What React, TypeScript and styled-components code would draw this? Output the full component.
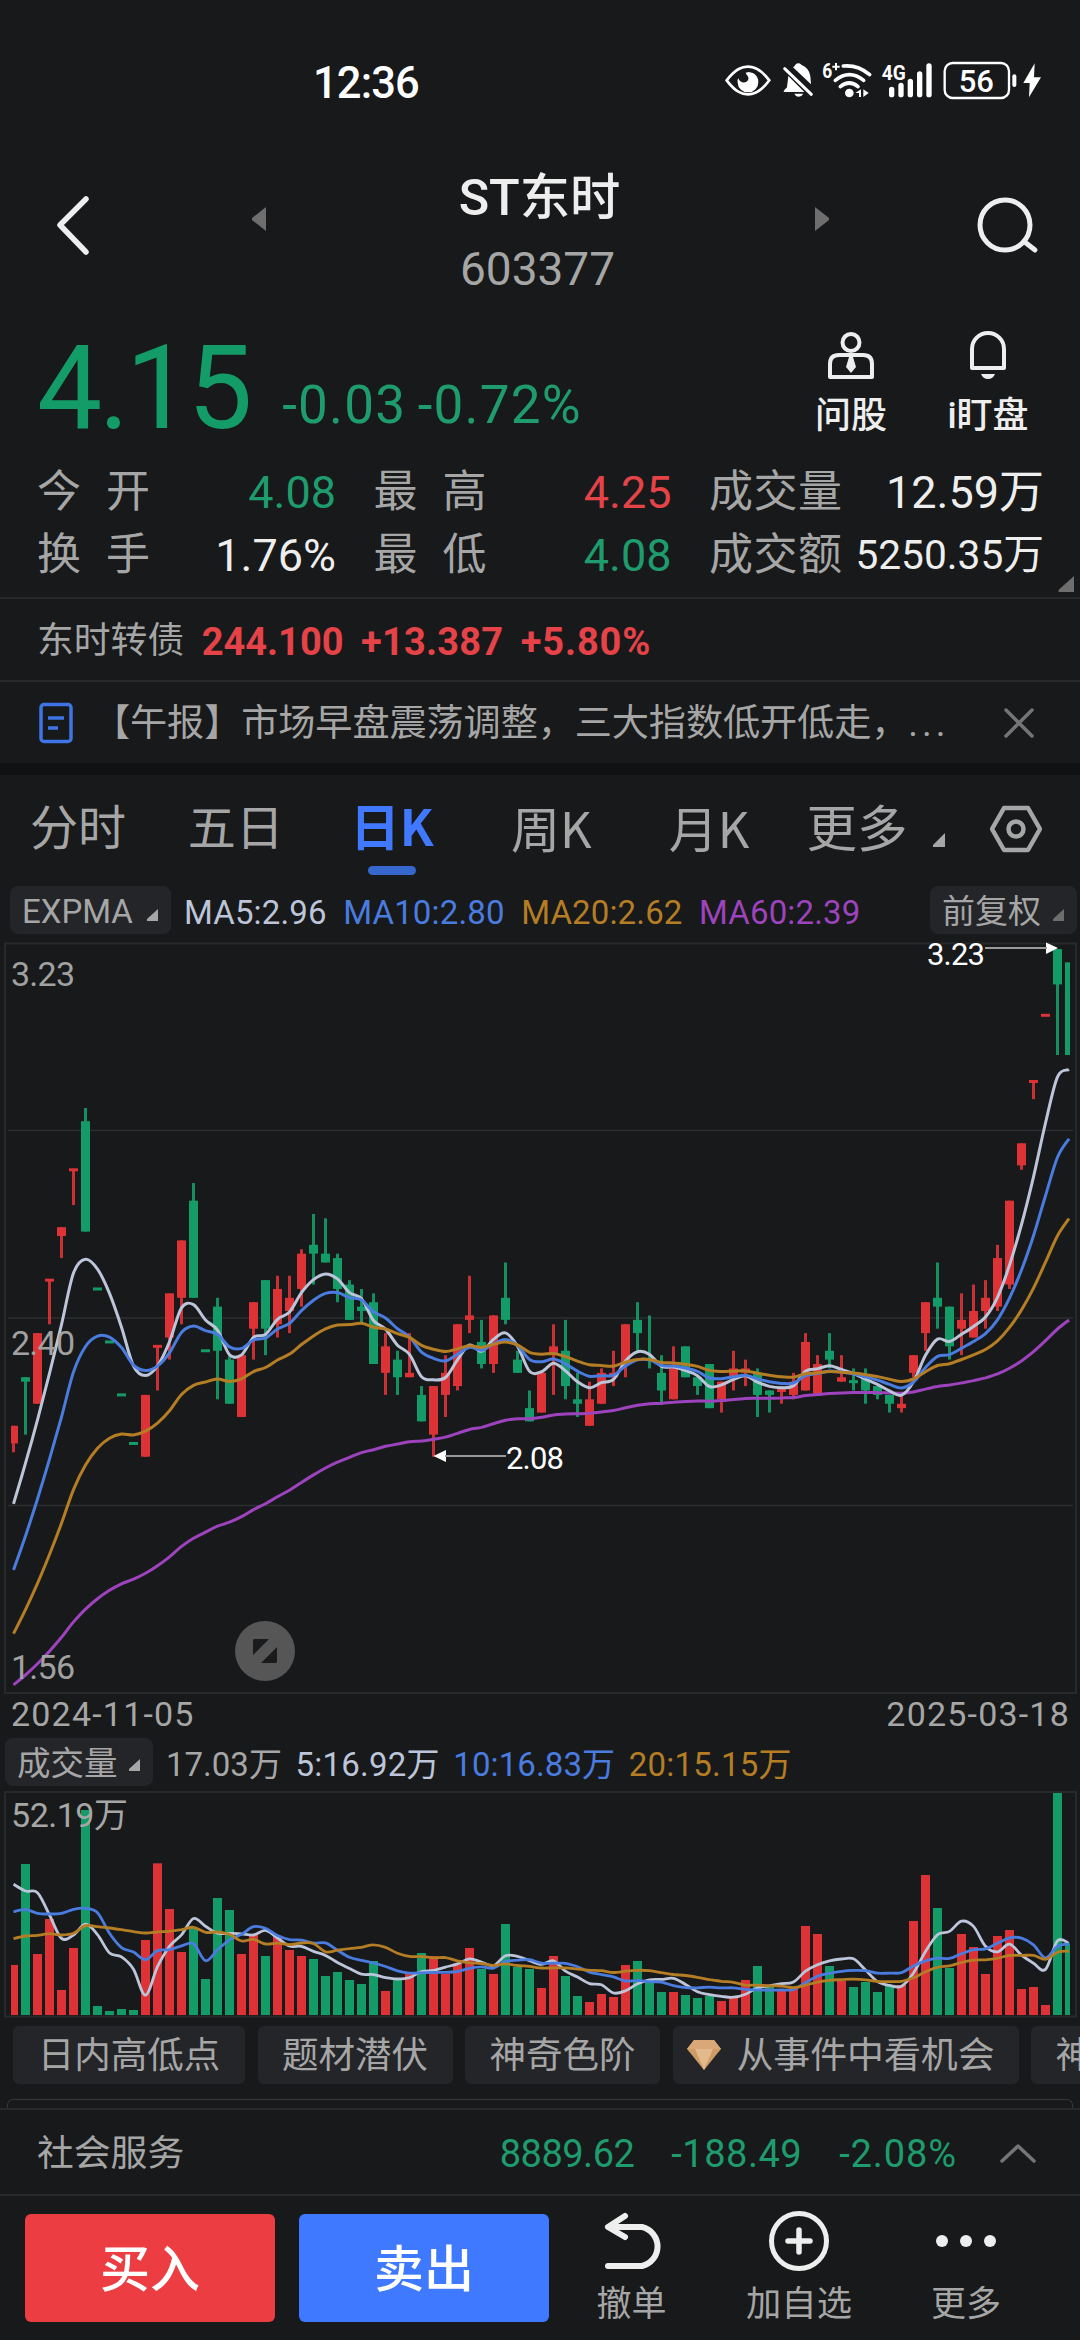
import React from "react";
import styled, { createGlobalStyle } from "styled-components";

const C = {
  bg: "#17191a",
  bright: "#eeeeee",
  text: "#a6a6a6",
  faint: "#6e6e6e",
  line: "#28292b",
  green: "#149c68",
  greenText: "#1f9c6d",
  red: "#dd3336",
  redText: "#e54348",
  blue: "#4a7ce0",
  orange: "#b57d24",
  purple: "#9d43bd",
  pale: "#bcc5d9",
  chip: "#242529",
};

const Global = createGlobalStyle`
  * { box-sizing: border-box; }
  html, body { margin: 0; background: ${C.bg}; }
  body { font-family: Roboto, "Noto Sans CJK SC", sans-serif; color: ${C.text}; }
`;

const Screen = styled.main`
  width: 1080px;
  height: 2340px;
  overflow: hidden;
  display: flex;
  flex-direction: column;
  background: ${C.bg};
`;

const Txt = styled.span<{ $s: number; $c?: string; $w?: number; $ls?: number; $cjk?: boolean }>`
  padding: ${(p) => (p.$cjk ? "0 0 0.06em" : "0.08em 0 0")};
  font-family: ${(p) => (p.$cjk ? '"Noto Sans CJK SC", sans-serif' : "inherit")};
  font-size: ${(p) => p.$s}px;
  color: ${(p) => p.$c ?? C.text};
  font-weight: ${(p) => p.$w ?? 400};
  letter-spacing: ${(p) => p.$ls ?? 0}px;
  line-height: 1;
  white-space: nowrap;
`;

/* ---------- status bar ---------- */
const StatusBar = styled.div`
  height: 164px;
  display: flex;
  align-items: center;
  justify-content: space-between;
  padding: 0 37px 0 313px;
`;
const StatusIcons = styled.div`
  display: flex;
  height: 64px;
`;

/* ---------- header ---------- */
const Header = styled.header`
  height: 156px;
  display: grid;
  grid-template-columns: 196px 189px 374px 162px 64px;
  padding-left: 55px;
`;
const HeaderIcon = styled.div<{ $top: number }>`
  padding-top: ${(p) => p.$top}px;
`;
const Titles = styled.div`
  width: 199px;
  display: flex;
  flex-direction: column;
  align-items: center;
  padding-top: 5px;
  gap: 19px;
`;
const Code = styled.div`
  display: flex;
  padding-right: 4px;
`;

/* ---------- quote ---------- */
const Quote = styled.section`
  height: 130px;
  display: flex;
  justify-content: space-between;
  padding: 0 52px 0 37px;
`;
const PriceGroup = styled.div`
  height: 126px;
  display: flex;
  align-items: flex-end;
  gap: 33px;
`;
const Change = styled.div`
  display: flex;
  gap: 11.5px;
  padding-bottom: 14px;
`;
const QuickActions = styled.div`
  display: flex;
  gap: 57px;
  padding-top: 10px;
`;
const QuickAction = styled.div`
  width: 80px;
  display: flex;
  flex-direction: column;
  align-items: center;
  gap: 15px;
`;
const Stats = styled.section`
  height: 149px;
  display: grid;
  grid-template-columns: 299px 298px 335px;
  grid-template-rows: 63px 63px;
  column-gap: 37.5px;
  padding: 9px 36px 0 37px;
  border-bottom: 2px solid ${C.line};
  position: relative;
`;
const Stat = styled.div`
  display: flex;
  align-items: center;
  justify-content: space-between;
`;
const StatLabel = styled.div<{ $wide?: boolean }>`
  width: ${(p) => (p.$wide ? 133 : 113)}px;
  display: flex;
  justify-content: space-between;
`;
const CornerMark = styled.div`
  position: absolute;
  right: 6px;
  bottom: 5px;
  display: flex;
`;

/* ---------- bond + news ---------- */
const BondRow = styled.section`
  height: 83px;
  display: flex;
  align-items: center;
  gap: 17.5px;
  padding: 1px 37px 0;
  border-bottom: 2px solid ${C.line};
`;
const NewsRow = styled.section`
  height: 81px;
  display: flex;
  align-items: center;
  padding: 0 45px 0 37px;
`;
const NewsText = styled.div`
  flex: 1;
  padding-left: 18px;
  display: flex;
  align-items: baseline;
`;
const Band = styled.div`
  height: 12px;
  background: #101112;
`;

/* ---------- tabs ---------- */
const Tabs = styled.nav`
  height: 111px;
  display: flex;
  align-items: flex-start;
  padding: 0 38px 0 30px;
`;
const Tab = styled.div<{ $w: number }>`
  width: ${(p) => p.$w}px;
  height: 105px;
  display: flex;
  flex-direction: column;
  justify-content: center;
  align-items: flex-start;
`;
const ActiveLabel = styled.div`
  display: flex;
  flex-direction: column;
  align-items: center;
  gap: 13px;
  padding-top: 20px;
`;
const Underline = styled.i`
  width: 48px;
  height: 9px;
  border-radius: 5px;
  background: #3567cc;
`;
const MoreTab = styled.div`
  width: 184px;
  height: 106px;
  display: flex;
  align-items: center;
  gap: 25px;
`;
const TabIcon = styled.div`
  height: 108px;
  display: flex;
  align-items: center;
`;

/* ---------- indicator rows ---------- */
const IndicatorRow = styled.div<{ $h: number; $gap: number; $left: number }>`
  height: ${(p) => p.$h}px;
  display: flex;
  align-items: flex-start;
  padding: 0 3px 0 ${(p) => p.$left}px;
  gap: ${(p) => p.$gap}px;
`;
const Selector = styled.div<{ $w: number; $push?: boolean }>`
  width: ${(p) => p.$w}px;
  height: 48px;
  margin-left: ${(p) => (p.$push ? "auto" : "0")};
  display: flex;
  align-items: center;
  justify-content: space-between;
  padding: 0 12px;
  border-radius: 8px;
  background: ${C.chip};
`;
const Values = styled.div<{ $gap: number }>`
  height: 50px;
  display: flex;
  align-items: center;
  gap: ${(p) => p.$gap}px;
`;
const Chart = styled.svg`
  display: block;
  flex: none;
  overflow: visible;
  font-family: Roboto, "Noto Sans CJK SC", sans-serif;
`;
const DateRow = styled.div`
  height: 44px;
  display: flex;
  align-items: center;
  justify-content: space-between;
  padding: 0 10px 7px 11px;
`;

/* ---------- chips ---------- */
const Chips = styled.div`
  height: 73px;
  display: flex;
  gap: 12.5px;
  padding: 8px 0 0 13px;
  overflow: hidden;
`;
const Chip = styled.div<{ $w: number; $icon?: boolean }>`
  flex: none;
  width: ${(p) => p.$w}px;
  height: 58px;
  display: flex;
  align-items: center;
  justify-content: center;
  gap: 15px;
  padding-right: ${(p) => (p.$icon ? 9 : 0)}px;
  border-radius: 6px;
  background: ${C.chip};
`;
const PanelEdge = styled.div`
  height: 9px;
  margin: 8px 7px 0;
  border: 1.5px solid #35373a;
  border-bottom: 0;
  border-radius: 6px 6px 0 0;
`;

/* ---------- bottom ---------- */
const SectorRow = styled.section`
  height: 88px;
  display: flex;
  align-items: center;
  padding: 1px 44px 0 37px;
  border-top: 2px solid ${C.line};
  border-bottom: 2px solid ${C.line};
`;
const SectorValues = styled.div`
  margin-left: auto;
  display: flex;
  gap: 37px;
  padding-right: 43px;
`;
const ActionBar = styled.footer`
  flex: 1;
  display: flex;
  padding: 18px 0 0 25px;
`;
const TradeButton = styled.button<{ $bg: string }>`
  width: 250px;
  height: 108px;
  margin: 0 24px 0 0;
  padding: 4px 0 0;
  border: 0;
  border-radius: 6px;
  background: ${(p) => p.$bg};
  font-family: inherit;
`;
const FootItem = styled.div<{ $w: number }>`
  width: ${(p) => p.$w}px;
  height: 112px;
  display: flex;
  flex-direction: column;
  align-items: center;
  justify-content: space-between;
  margin-top: -4px;
`;

const Tri = ({ s = 12, c = C.text }: { s?: number; c?: string }) => (
  <svg width={s} height={s} viewBox="0 0 12 12">
    <path d="M12 0V12H1Q-.5 11.5 1 10Z" fill={c} />
  </svg>
);

/* ---------- data ---------- */
type Bar = [up: number, high: number, top: number, bottom: number, low: number];

// Prices are in cents above the 2.08 low.
const candles: Bar[] = [
  [1, 7, 7, 3, 1], [0, 18, 18, 17, 5], [1, 28, 28, 12, 12], [1, 40, 40, 40, 30], [1, 52, 52, 50, 45],
  [1, 65, 65, 65, 57], [0, 79, 76, 51, 51], [0, 38, 38, 38, 38], [0, 26, 26, 26, 26], [0, 14, 14, 14, 14],
  [0, 3, 3, 3, 3], [1, 14, 14, 0, 0], [1, 25, 25, 25, 15], [1, 37, 37, 27, 22], [1, 49, 49, 36, 30],
  [0, 62, 58, 36, 36], [0, 24, 24, 24, 24], [0, 36, 34, 24, 13], [0, 23, 22, 12, 12], [1, 23, 23, 9, 9],
  [1, 35, 35, 29, 22], [0, 40, 40, 29, 23], [1, 41, 38, 30, 27], [1, 41, 36, 33, 28], [1, 47, 46, 38, 34],
  [0, 55, 48, 46, 39], [0, 54, 46, 44, 44], [0, 46, 45, 38, 35], [0, 40, 39, 31, 31], [0, 38, 34, 33, 30],
  [0, 37, 35, 21, 21], [1, 28, 25, 19, 14], [0, 24, 22, 18, 14], [1, 28, 19, 18, 18], [0, 16, 14, 8, 8],
  [1, 16, 16, 5, 0], [1, 23, 19, 14, 9], [1, 30, 30, 16, 15], [1, 41, 32, 31, 28], [0, 31, 26, 21, 20],
  [1, 32, 32, 21, 19], [0, 44, 36, 31, 30], [0, 24, 22, 19, 19], [0, 15, 11, 8, 8], [1, 19, 19, 10, 10],
  [1, 30, 25, 23, 14], [0, 31, 24, 16, 13], [0, 19, 13, 12, 9], [1, 17, 13, 7, 7], [1, 20, 19, 12, 12],
  [1, 24, 19, 18, 16], [1, 30, 30, 21, 18], [0, 35, 31, 28, 24], [0, 32, 22, 22, 20], [0, 23, 19, 15, 12],
  [1, 25, 20, 13, 13], [0, 25, 25, 18, 18], [0, 18, 18, 16, 14], [0, 21, 21, 11, 11], [1, 17, 17, 13, 10],
  [1, 24, 20, 18, 15], [1, 22, 20, 19, 16], [0, 20, 19, 14, 9], [0, 15, 15, 14, 10], [1, 16, 15, 15, 12],
  [1, 19, 17, 14, 13], [1, 28, 26, 15, 15], [1, 23, 21, 14, 14], [0, 28, 24, 22, 20], [1, 23, 18, 17, 17],
  [0, 20, 17, 17, 15], [0, 20, 18, 15, 12], [0, 16, 16, 14, 13], [0, 14, 14, 12, 10], [1, 14, 12, 11, 10],
  [1, 23, 23, 19, 18], [1, 35, 35, 28, 24], [0, 44, 36, 34, 29], [0, 34, 34, 25, 22], [1, 37, 31, 29, 23],
  [1, 39, 33, 27, 27], [1, 40, 36, 33, 29], [1, 48, 45, 34, 33], [1, 58, 58, 39, 38], [1, 71, 71, 66, 65],
  [1, 85, 85, 85, 81], [1, 100, 100, 100, 100], [0, 115, 115, 107, 91], [0, 112, 112, 91, 91],
];

// Volume bar heights, in thirds of a pixel.
const volumes = [
  735, 432, 702, 597, 810, 684, 270, 858, 873, 867, 870, 660, 430, 567, 696, 624, 777, 534, 570, 702, 642, 708, 648,
  690, 708, 717, 768, 756, 780, 792, 723, 813, 777, 760, 699, 708, 762, 730, 684, 747, 762, 612, 741, 747, 804, 708,
  768, 828, 846, 822, 831, 735, 723, 786, 816, 816, 825, 834, 828, 843, 828, 780, 738, 798, 810, 804, 618, 642, 738,
  783, 801, 786, 816, 795, 795, 603, 465, 564, 744, 642, 681, 762, 648, 630, 807, 801, 855, 219, 670,
].map((v) => 885 - v);

const cx = (i: number) => 13.5 + 12 * i;
const TOP = 942;
const py = (n: number) => 1456.7 - 4.414 * n - TOP;

type Pt = [number, number];
const smooth = (p: Pt[]) => {
  let d = `M${p[0][0]} ${p[0][1].toFixed(1)}`;
  for (let i = 0; i < p.length - 1; i++) {
    const a = p[Math.max(i - 1, 0)], b = p[i], c = p[i + 1], e = p[Math.min(i + 2, p.length - 1)];
    d += `C${(b[0] + (c[0] - a[0]) / 6).toFixed(1)} ${(b[1] + (c[1] - a[1]) / 6).toFixed(1)} ${(c[0] - (e[0] - b[0]) / 6).toFixed(1)} ${(c[1] - (e[1] - b[1]) / 6).toFixed(1)} ${c[0]} ${c[1].toFixed(1)}`;
  }
  return d;
};

const ema = (period: number, seed: number) => {
  const k = 2 / (period + 1);
  let v = seed;
  const pts: Pt[] = candles.map((b, i) => {
    const close = b[0] ? b[2] : b[3];
    if (i > 0) v = v + k * (close - v);
    return [Math.min(cx(i), 1069), py(v)];
  });
  return smooth(pts);
};

const volMa = (period: number, lead: number[]) =>
  smooth(
    volumes.map((_, i): Pt => {
      const v =
        i < lead.length
          ? 885 - lead[i]
          : volumes.slice(i - period + 1, i + 1).reduce((s, n) => s + n, 0) / period;
      return [Math.min(cx(i), 1069), 224 - v / 3];
    }),
  );

const clip = (i: number) => {
  const x = Math.max(cx(i) - 4.5, 11);
  const r = Math.min(cx(i) + 4.5, 1070);
  return { x, w: r - x };
};

const priceLines: [string, number, number][] = [
  [C.purple, 60, -51.7],
  [C.pale, 5, -10.7],
  [C.blue, 10, -25.7],
  [C.orange, 20, -40.1],
];
const volLines: [string, number, number[]][] = [
  [C.pale, 5, [493, 513, 518, 585]],
  [C.blue, 10, [575, 568, 580, 582, 580, 568, 565, 578, 640]],
  [C.orange, 20, [656, 648, 646, 641, 645, 640, 617, 620, 624, 629, 635, 639, 636, 634, 629, 622, 637, 636, 643]],
];

const PriceChart = () => (
  <Chart width="1080" height="752" viewBox="0 0 1080 752">
    <path d="M8 188.5H1073M8 376H1073M8 563.5H1073" stroke="#2c2e30" strokeWidth="1.5" />
    <rect x="5" y="1.5" width="1071" height="749.5" fill="none" stroke={C.line} strokeWidth="2" />
    {candles.map(([up, h, t, b, l], i) => {
      const { x, w } = clip(i);
      const flat = t === b;
      return (
        <g key={i} fill={up ? C.red : C.green}>
          {h !== l && i < 88 && <rect x={cx(i) - 1.5} y={py(h)} width="3" height={py(l) - py(h)} opacity="0.9" />}
          <rect x={x} y={flat ? py(t) - 1.5 : py(t)} width={w} height={flat ? 3 : py(b) - py(t)} />
        </g>
      );
    })}
    {priceLines.map(([c, n, seed]) => (
      <path key={n} d={ema(n, seed)} fill="none" stroke={c} strokeWidth="3" />
    ))}
    <g fontSize="34" fill={C.text} opacity="0.97">
      <text x="11" y="44" textLength="64">3.23</text>
      <text x="11" y="413" textLength="64">2.40</text>
      <text x="11" y="737" textLength="64">1.56</text>
    </g>
    <g fontSize="31" fill="#fff">
      <text x="927" y="23" textLength="58">3.23</text>
      <text x="506" y="527" textLength="58">2.08</text>
      <path d="M1046 0.5L1058 6L1046 12Z M446 508L433.500 514L446 520Z" />
    </g>
    <path d="M985 6H1047M445 514H506" stroke="#9a9a9a" strokeWidth="2" />
    <circle cx="265" cy="709" r="30" fill="#565656" />
    <path d="M254 697H269L253 713V698Z M277 705V720Q277 721 276 721H261Z" fill="#1a1b1c" />
  </Chart>
);

const VolumeChart = () => (
  <Chart width="1080" height="227" viewBox="0 0 1080 227">
    <rect x="5" y="1" width="1071" height="224.500" fill="none" stroke={C.line} strokeWidth="2" />
    {volumes.map((v, i) => {
      const { x, w } = clip(i);
      return (
        <rect key={i} x={x} y={224 - v / 3} width={w} height={v / 3} fill={candles[i][0] ? C.red : C.green} />
      );
    })}
    {volLines.map(([c, n, lead]) => (
      <path key={n} d={volMa(n, lead)} fill="none" stroke={c} strokeWidth="2.800" />
    ))}
    <text x="11" y="36" fontSize="34" fill={C.text} textLength="117">
      52.19万
    </text>
  </Chart>
);

const statRows: [string, string, string, string][] = [
  ["今开", "4.08", C.greenText, ""],
  ["最高", "4.25", C.redText, ""],
  ["成交量", "12.59万", C.bright, "wide"],
  ["换手", "1.76%", C.bright, ""],
  ["最低", "4.08", C.greenText, ""],
  ["成交额", "5250.35万", C.bright, "wide"],
];

export default function App() {
  return (
    <>
      <Global />
      <Screen>
        <StatusBar>
          <Txt $s={43.5} $w={500} $c="#fff" $ls={-0.9}>12:36</Txt>
          <StatusIcons>
            <svg width="56" height="64" viewBox="72 0 168 192">
              <path d="M77 91C105 55 124 50 141 50S178 55 205 91C178 128 158 133 141 133S105 128 77 91Z" fill="none" stroke="#fff" strokeWidth="8" />
              <path d="M143 66C162 68 172 80 172 96A31 30 0 0 1 110 98C109 92 110 88 112 85C116 100 137 102 142 88C145 80 136 75 134 68Z" fill="#fff" />
            </svg>
            <svg width="40" height="64" viewBox="240 0 120 192">
              <path d="M276 52Q281 49 283 44Q292 36 301 44Q325 54 328 78L330 103Z" fill="#fff" />
              <path d="M262 78L310 126H249Q246 124 250 120L258 112Z" fill="#fff" />
              <path d="M251 56L331 133" stroke="#fff" strokeWidth="9" strokeLinecap="round" />
              <path d="M280 131H307Q302 140 293 140T280 131Z" fill="#fff" />
            </svg>
            <svg width="58.333" height="64" viewBox="360 0 175 192">
              <text x="364" y="83" fontSize="60" fontWeight="700" fill="#fff" textLength="30" lengthAdjust="spacingAndGlyphs">6</text>
              <path d="M394 50H416M405 39V61" stroke="#fff" strokeWidth="6" />
              <g fill="none" stroke="#fff" strokeWidth="11">
                <path d="M427 48Q471 44 506 74" strokeLinecap="round" />
                <path d="M403 91Q445 57 488 91" strokeLinecap="round" />
                <path d="M418 110Q445 88 471 110" strokeLinecap="round" />
              </g>
              <circle cx="445" cy="129" r="13" fill="#fff" />
              <path d="M463 129L480 118V141H474V129ZM487 118L503 129L487 141Z" fill="#fff" />
            </svg>
            <svg width="60" height="64" viewBox="535 0 180 192">
              <text x="540" y="91" fontSize="62" fontWeight="700" fill="#fff" textLength="72" lengthAdjust="spacingAndGlyphs">4G</text>
              <path d="M570 118V134M598 106V134M626 94V134M654 72V134M682 48V134" stroke="#fff" strokeWidth="16" strokeLinecap="round" />
            </svg>
            <svg width="80" height="64" viewBox="715 0 240 192">
              <rect x="729" y="39" width="193" height="105" rx="24" fill="none" stroke="#fff" strokeWidth="7" />
              <text x="824" y="125" fontSize="93" fontWeight="500" fill="#fff" textAnchor="middle">56</text>
              <path d="M938 79V105" stroke="#fff" strokeWidth="12" strokeLinecap="round" />
            </svg>
            <svg width="23.333" height="64" viewBox="955 0 70 192">
              <path d="M999 40L965 99H984L982 142L1018 82H997Z" fill="#fff" />
            </svg>
          </StatusIcons>
        </StatusBar>

        <Header>
          <HeaderIcon $top={31}>
            <svg width="38" height="60" viewBox="0 0 38 60">
              <path d="M31 4L5 30L31 57" fill="none" stroke={C.bright} strokeWidth="5.500" strokeLinecap="round" strokeLinejoin="round" />
            </svg>
          </HeaderIcon>
          <HeaderIcon $top={43}>
            <svg width="16" height="24" viewBox="0 0 16 24">
              <path d="M15 0V24L1 13V11Z" fill="#6e6e6e" />
            </svg>
          </HeaderIcon>
          <Titles>
            <Txt $s={50.3} $w={500} $c={C.bright}>ST东时</Txt>
            <Code><Txt $s={46}>603377</Txt></Code>
          </Titles>
          <HeaderIcon $top={43}>
            <svg width="16" height="24" viewBox="0 0 16 24">
              <path d="M1 0V24L15 13V11Z" fill="#6e6e6e" />
            </svg>
          </HeaderIcon>
          <HeaderIcon $top={32}>
            <svg width="64" height="60" viewBox="0 0 64 60">
              <circle cx="29" cy="29" r="25" fill="none" stroke={C.bright} strokeWidth="5" />
              <path d="M50 47L59 54" stroke={C.bright} strokeWidth="5" strokeLinecap="round" />
            </svg>
          </HeaderIcon>
        </Header>

        <Quote>
          <PriceGroup>
            <Txt $s={116} $c={C.green} $ls={-3.5}>4.15</Txt>
            <Change>
              <Txt $s={53} $c={C.greenText} $ls={1.2}>-0.03</Txt>
              <Txt $s={53} $c={C.greenText} $ls={1.2}>-0.72%</Txt>
            </Change>
          </PriceGroup>
          <QuickActions>
            <QuickAction>
              <svg width="48" height="50" viewBox="0 0 48 50">
                <g fill="none" stroke={C.bright} strokeWidth="4">
                  <circle cx="24" cy="12.500" r="8.500" />
                  <path d="M3 47V34Q3 25 12 25H36Q45 25 45 34V47Z" strokeLinejoin="round" />
                </g>
                <path d="M22 27H26L29 37L24 43L19 37Z" fill={C.bright} />
              </svg>
              <Txt $s={36} $w={500} $c={C.bright}>问股</Txt>
            </QuickAction>
            <QuickAction>
              <svg width="48" height="50" viewBox="0 0 48 50">
                <path d="M8 38V19A16 16 0 0 1 40 19V38Z" fill="none" stroke={C.bright} strokeWidth="4" strokeLinejoin="round" />
                <path d="M17 44H31Q29 49 24 49T17 44Z" fill={C.bright} />
              </svg>
              <Txt $s={36} $w={500} $c={C.bright}>i盯盘</Txt>
            </QuickAction>
          </QuickActions>
        </Quote>

        <Stats>
          {statRows.map(([label, value, color, wide]) => (
            <Stat key={label}>
              <StatLabel $wide={!!wide}>
                {label.split("").map((ch) => (
                  <Txt key={ch} $s={44}>{ch}</Txt>
                ))}
              </StatLabel>
              <Txt $s={value.length > 7 ? 40.7 : 45} $c={color}>{value}</Txt>
            </Stat>
          ))}
          <CornerMark><Tri s={16} c={C.faint} /></CornerMark>
        </Stats>

        <BondRow>
          <Txt $s={36.8}>东时转债</Txt>
          <Txt $s={38} $w={700} $c={C.redText}>244.100</Txt>
          <Txt $s={38} $w={700} $c={C.redText} $ls={0.2}>+13.387</Txt>
          <Txt $s={38} $w={700} $c={C.redText} $ls={0.9}>+5.80%</Txt>
        </BondRow>
        <NewsRow>
          <svg width="38" height="44" viewBox="0 0 38 44">
            <rect x="4" y="3.500" width="30" height="37" rx="3" fill="none" stroke="#3f74e6" strokeWidth="3.500" />
            <path d="M11 17H27M11 27H21" stroke="#3f74e6" strokeWidth="3.500" />
          </svg>
          <NewsText>
            <Txt $s={37.2} $ls={-0.13}>【午报】市场早盘震荡调整，三大指数低开低走，</Txt>
            <Txt $s={37} $ls={4}>...</Txt>
          </NewsText>
          <svg width="32" height="32" viewBox="0 0 32 32">
            <path d="M3 3L29 29M29 3L3 29" stroke="#757575" strokeWidth="3.500" strokeLinecap="round" />
          </svg>
        </NewsRow>
        <Band />

        <Tabs>
          <Tab $w={158}><Txt $s={48}>分时</Txt></Tab>
          <Tab $w={163}><Txt $s={48}>五日</Txt></Tab>
          <Tab $w={161}>
            <ActiveLabel>
              <Txt $s={49.5} $w={700} $c="#4079ff" $cjk>日K</Txt>
              <Underline />
            </ActiveLabel>
          </Tab>
          <Tab $w={158}><Txt $s={49} $cjk>周K</Txt></Tab>
          <Tab $w={138}><Txt $s={49} $cjk>月K</Txt></Tab>
          <MoreTab>
            <Txt $s={50.5}>更多</Txt>
            <svg width="14" height="44" viewBox="0 0 14 44"><path d="M13 27V41H1V39Z" fill={C.text} /></svg>
          </MoreTab>
          <TabIcon>
            <svg width="52" height="48" viewBox="0 0 52 48">
              <path d="M14 3H38L50 24L38 45H14L2 24Z" fill="none" stroke={C.text} strokeWidth="4.500" strokeLinejoin="round" />
              <circle cx="26" cy="24" r="7.500" fill="none" stroke={C.text} strokeWidth="4.500" />
            </svg>
          </TabIcon>
        </Tabs>

        <IndicatorRow $h={56} $gap={13} $left={10}>
          <Selector $w={161}>
            <Txt $s={33}>EXPMA</Txt>
            <svg width="13" height="28" viewBox="0 0 13 28"><path d="M12 13V25H1V23Z" fill={C.text} /></svg>
          </Selector>
          <Values $gap={16.5}>
            <Txt $s={33} $c={C.pale} $ls={0.15}>MA5:2.96</Txt>
            <Txt $s={33} $c={C.blue} $ls={0.15}>MA10:2.80</Txt>
            <Txt $s={33} $c={C.orange} $ls={0.15}>MA20:2.62</Txt>
            <Txt $s={33} $c={C.purple} $ls={0.15}>MA60:2.39</Txt>
          </Values>
          <Selector $w={147} $push>
            <Txt $s={33}>前复权</Txt>
            <svg width="13" height="28" viewBox="0 0 13 28"><path d="M12 13V25H1V23Z" fill={C.faint} /></svg>
          </Selector>
        </IndicatorRow>

        <PriceChart />

        <DateRow>
          <Txt $s={34} $ls={1.2}>2024-11-05</Txt>
          <Txt $s={34} $ls={1.2}>2025-03-18</Txt>
        </DateRow>

        <IndicatorRow $h={53} $gap={13} $left={5}>
          <Selector $w={148}>
            <Txt $s={33.5}>成交量</Txt>
            <svg width="13" height="28" viewBox="0 0 13 28"><path d="M12 11V23H1V21Z" fill={C.text} /></svg>
          </Selector>
          <Values $gap={13.7}>
            <Txt $s={33}>17.03万</Txt>
            <Txt $s={33} $c={C.pale} $ls={0.2}>5:16.92万</Txt>
            <Txt $s={33} $c={C.blue} $ls={0.1}>10:16.83万</Txt>
            <Txt $s={33} $c={C.orange} $ls={0.2}>20:15.15万</Txt>
          </Values>
        </IndicatorRow>

        <VolumeChart />

        <Chips>
          <Chip $w={232}><Txt $s={36.5}>日内高低点</Txt></Chip>
          <Chip $w={195}><Txt $s={36.5}>题材潜伏</Txt></Chip>
          <Chip $w={195}><Txt $s={36.5}>神奇色阶</Txt></Chip>
          <Chip $w={346} $icon>
            <svg width="34" height="30" viewBox="0 0 34 30">
              <path d="M7 0H27L34 9L17 30L0 9Z" fill="#cf9a66" />
              <path d="M7 0H27L34 9H0Z" fill="#d9a878" />
              <path d="M8 9H26L17 30Z" fill="#e3b98c" />
            </svg>
            <Txt $s={36.9}>从事件中看机会</Txt>
          </Chip>
          <Chip $w={195}><Txt $s={36.5}>神奇九转</Txt></Chip>
        </Chips>
        <PanelEdge />

        <SectorRow>
          <Txt $s={36.8}>社会服务</Txt>
          <SectorValues>
            <Txt $s={38} $c={C.greenText} $ls={-0.5}>8889.62</Txt>
            <Txt $s={38} $c={C.greenText} $ls={0.5}>-188.49</Txt>
            <Txt $s={38} $c={C.greenText} $ls={0.9}>-2.08%</Txt>
          </SectorValues>
          <svg width="36" height="22" viewBox="0 0 36 22">
            <path d="M2 19L18 4L34 19" fill="none" stroke="#757575" strokeWidth="3.500" strokeLinecap="round" strokeLinejoin="round" />
          </svg>
        </SectorRow>

        <ActionBar>
          <TradeButton $bg="#ec3d43"><Txt $s={50} $w={500} $c="#fff">买入</Txt></TradeButton>
          <TradeButton $bg="#3f79ff"><Txt $s={50} $w={500} $c="#fff">卖出</Txt></TradeButton>
          <FootItem $w={117}>
            <svg width="60" height="62" viewBox="-2 0 60 62">
              <path d="M4 56H38A20 20 0 0 0 38 17H5M21 6L4 17L21 27" fill="none" stroke={C.bright} strokeWidth="6" strokeLinejoin="round" strokeLinecap="round" />
            </svg>
            <Txt $s={35}>撤单</Txt>
          </FootItem>
          <FootItem $w={218}>
            <svg width="62" height="62" viewBox="0 0 62 62">
              <circle cx="31" cy="31" r="27.500" fill="none" stroke={C.bright} strokeWidth="5" />
              <path d="M20 31H42M31 20V42" stroke={C.bright} strokeWidth="5.500" strokeLinecap="round" />
            </svg>
            <Txt $s={35.3}>加自选</Txt>
          </FootItem>
          <FootItem $w={116}>
            <svg width="62" height="62" viewBox="0 0 62 62">
              <g fill={C.bright}>
                <circle cx="7" cy="31" r="6" />
                <circle cx="31" cy="31" r="6" />
                <circle cx="55" cy="31" r="6" />
              </g>
            </svg>
            <Txt $s={35}>更多</Txt>
          </FootItem>
        </ActionBar>
      </Screen>
    </>
  );
}
